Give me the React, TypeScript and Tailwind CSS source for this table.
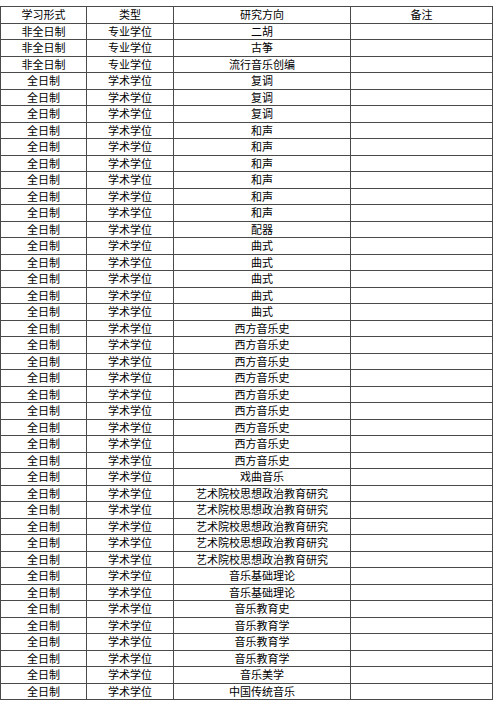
import React from "react";

// 研究方向列表：[学习形式, 类型, 研究方向]
const rows: [string, string, string][] = [
  ["非全日制", "专业学位", "二胡"],
  ["非全日制", "专业学位", "古筝"],
  ["非全日制", "专业学位", "流行音乐创编"],
  ...Array(3).fill(["全日制", "学术学位", "复调"]),
  ...Array(6).fill(["全日制", "学术学位", "和声"]),
  ["全日制", "学术学位", "配器"],
  ...Array(5).fill(["全日制", "学术学位", "曲式"]),
  ...Array(9).fill(["全日制", "学术学位", "西方音乐史"]),
  ["全日制", "学术学位", "戏曲音乐"],
  ...Array(5).fill(["全日制", "学术学位", "艺术院校思想政治教育研究"]),
  ...Array(2).fill(["全日制", "学术学位", "音乐基础理论"]),
  ["全日制", "学术学位", "音乐教育史"],
  ...Array(3).fill(["全日制", "学术学位", "音乐教育学"]),
  ["全日制", "学术学位", "音乐美学"],
  ["全日制", "学术学位", "中国传统音乐"],
];

const cell = "border border-[#4a4a4a] p-0 text-center font-normal leading-none";

export default function App() {
  return (
    <div
      className="h-[702px] w-[495px] overflow-hidden bg-white pt-[6px] text-[11px] text-black"
      style={{ fontFamily: '"Noto Sans CJK SC", "Noto Sans", sans-serif' }}
    >
      <table className="w-[492px] table-fixed border-collapse">
        <colgroup>
          <col className="w-[86px]" />
          <col className="w-[87px]" />
          <col className="w-[177px]" />
          <col className="w-[142px]" />
        </colgroup>
        <thead>
          <tr className="h-[16.5px]">
            <th className={cell}>学习形式</th>
            <th className={cell}>类型</th>
            <th className={cell}>研究方向</th>
            <th className={cell}>备注</th>
          </tr>
        </thead>
        <tbody>
          {rows.map((r, i) => (
            <tr key={i} className="h-[16.5px]">
              <td className={cell}>{r[0]}</td>
              <td className={cell}>{r[1]}</td>
              <td className={cell}>{r[2]}</td>
              <td className={cell}></td>
            </tr>
          ))}
        </tbody>
      </table>
    </div>
  );
}
